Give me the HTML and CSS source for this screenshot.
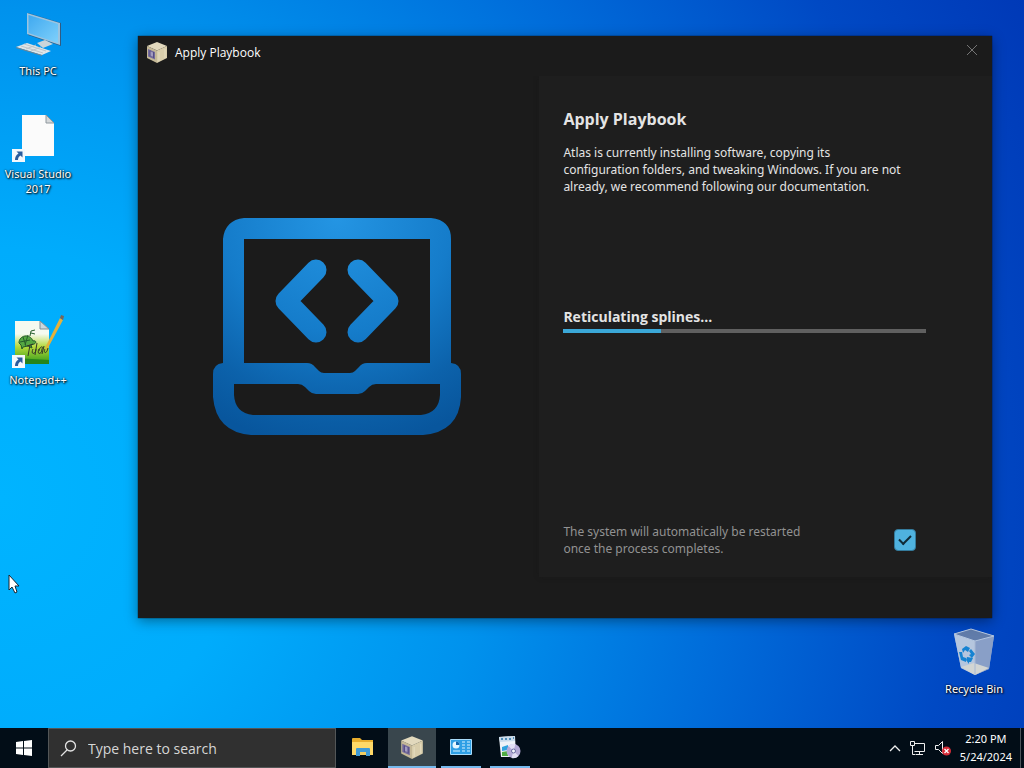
FILE: index.html
```html
<!DOCTYPE html>
<html lang="en">

<head>
	<title>Apply Playbook</title>
	<meta charset="UTF-8">
	<meta name="viewport" content="width=device-width, initial-scale=1">
	<link rel="stylesheet" href="styles.css">
</head>

<body>
	<svg width="0" height="0" class="defs" aria-hidden="true">
		<defs>
			<linearGradient id="screen" x1="0" y1="0" x2="1" y2="1">
				<stop offset="0" stop-color="#3fa9f0" />
				<stop offset="1" stop-color="#7fd0fb" />
			</linearGradient>
			<linearGradient id="grass" x1="0" y1="0" x2="0" y2="1">
				<stop offset="0.3" stop-color="#f6faf0" />
				<stop offset="0.6" stop-color="#b4d93a" />
				<stop offset="1" stop-color="#2f9a1c" />
			</linearGradient>
			<symbol id="shortcut" viewBox="0 0 13 13">
				<rect width="13" height="13" fill="#f4f8fc" />
				<path d="M4.500 2.500h6v6l-2-2c-2 1.500-2.500 2.500-2.500 4.500h-3c0-3 1-5 3.500-6.500z" fill="#2a5c9e" />
			</symbol>
			<symbol id="box" viewBox="0 0 24 24">
				<path d="M12 2l10 4-10 4.500L2 6z" fill="#e2d9bd" />
				<path d="M2 6l10 4.500V23L2 18z" fill="#c4b897" />
				<path d="M22 6l-10 4.500V23l10-5z" fill="#d8cdab" />
				<path d="M14 12v9M20 9v9" stroke="#e5dcc0" stroke-width="1" fill="none" />
				<path d="M3 9l7 3v7.500l-7-3z" fill="#746c9c" />
				<path d="M5 11.500l3 1v4l-3-1z" fill="#a39cc0" />
				<path d="M5 10.500v6M8.500 12v6" stroke="#554d86" stroke-width="1" />
			</symbol>
		</defs>
	</svg>

	<main class="desktop">
		<a href="#" class="shortcut this-pc">
			<svg width="48" height="48" viewBox="0 0 48 48">
				<path d="M14 2l33 10v23L14 24z" fill="#315b82" />
				<path d="M13 2l33 10v22L13 23z" fill="#9cc4df" />
				<path d="M14.500 4L44 13v19L14.500 22z" fill="url(#screen)" />
				<path d="M23 32l8-3 8 4-10 4z" fill="#cbd5da" />
				<path d="M2 36l11-4 24 8-9 4z" fill="#dfe5e8" />
				<path d="M2 36l26 8v1L2 37z" fill="#71848f" />
				<path d="M7 35l22 7M10 33l22 7M12 38l10-4M17 40l10-4" stroke="#bcc5ca" stroke-width="1" />
			</svg>
			<span>This PC</span>
		</a>
		<a href="#" class="shortcut visual-studio">
			<svg width="48" height="48" viewBox="0 0 48 48">
				<path d="M8 1h24l8 8v33H8z" fill="#fbfbfb" />
				<path d="M32 1v8h8z" fill="#d5d8da" stroke="#8f989e" stroke-width="1" />
				<use href="#shortcut" x="-2" y="35" width="13" height="13" />
			</svg>
			<span>Visual Studio 2017</span>
		</a>
		<a href="#" class="shortcut notepad">
			<svg width="52" height="52" viewBox="0 0 52 52">
				<path d="M3 5h25l9 8v35l-34-1z" fill="url(#grass)" />
				<path d="M28 5v8h9z" fill="#cbd7de" stroke="#7f8d94" stroke-width="1" />
				<path d="M3 42l34 2v4H3z" fill="#26841b" />
				<path d="M7 27c0-8 11-10 14-2 3-1 4 2 1 3l-3 1 1 3-4-2-5 1-1 2-1-4z" fill="#55a842" stroke="#235a28" stroke-width="1" />
				<path d="M8 26l10-2M11 21l3 9M16 19l-3 10M18 20l1-5 4-1M19 17l4 1" stroke="#265e2b" stroke-width="1" fill="none" />
				<path d="M15 30l6-2M18 29l-2 11M21 33c-3 6 3 6 3 0M25 27l-2 12M27 33c-3 6 3 6 3 0 2-4-3-2-3 2M30 38l2-8M33 33c-2 5 2 5 3-1" stroke="#343827" stroke-width="1" fill="none" />
				<path d="M34 30L48 2l3 2-14 26-4 4z" fill="#e4b13b" />
				<path d="M48 2l1-3 3 1-1 4z" fill="#75665d" />
				<use href="#shortcut" x="0" y="39" width="13" height="13" />
			</svg>
			<span>Notepad++</span>
		</a>
		<a href="#" class="shortcut recycle-bin">
			<svg width="48" height="48" viewBox="0 0 48 48">
				<path d="M4 5l17-5 23 7-5 33-14 6-14-7z" fill="#8fa9cd" />
				<path d="M4 5l21 7v34l-14-7z" fill="#b5c6de" />
				<path d="M25 12l19-5-5 33-14 6z" fill="#899fc7" />
				<path d="M4 5l17-5 23 7-19 5z" fill="#617caa" stroke="#b4c6e0" stroke-width="1" />
				<path d="M11 38l13-4 15 5-14 7z" fill="#d2d5d3" />
				<path d="M25 12v34" stroke="#a7b8d4" stroke-width="1" />
				<path d="M12 20l4-3 4 2-2 4-3-2-2 3zM21 20l4 5-3 4-3-3 2-1-2-3zM9 23h3l1 5 3 1v4l-5-2zM17 28l6 1-2 4h-2v2l-3-4z" fill="#1683d2" />
			</svg>
			<span>Recycle Bin</span>
		</a>

		<section class="window">
			<header class="titlebar">
				<svg width="24" height="24"><use href="#box" /></svg>
				<span class="title">Apply Playbook</span>
				<button type="button" class="close" aria-label="Close">
					<svg width="12" height="12" viewBox="0 0 12 12">
						<path d="M1 1l10 10M11 1L1 11" stroke="#757575" stroke-width="1" />
					</svg>
				</button>
			</header>
			<div class="content">
				<div class="art">
					<svg width="248" height="217" viewBox="0 0 248 217">
						<defs>
							<radialGradient id="blue" gradientUnits="userSpaceOnUse" cx="124" cy="0" r="230">
								<stop offset="0" stop-color="#2495e3" />
								<stop offset="0.5" stop-color="#157cca" />
								<stop offset="0.8" stop-color="#0c62ab" />
								<stop offset="1" stop-color="#08569d" />
							</radialGradient>
						</defs>
						<path fill="url(#blue)" fill-rule="evenodd" d="M31 0H218Q238 2 238 21V145Q248 146 248 156V179Q246 214 210 217H38Q3 214 0 179V156Q0 146 10 145V21Q12 2 31 0Z
							M31 21V145H94Q99 145 102 149L106 153Q108 155 111 155H137Q140 155 142 153L146 149Q149 145 154 145H217V21Z
							M21 166V177Q22 195 40 197H208Q226 195 227 177V166H163Q159 166 156 169L152 173Q149 176 145 176H103Q99 176 96 173L92 169Q89 166 85 166Z" />
						<path d="M103 52L73 83L103 114M145 52L175 83L145 114" fill="none" stroke="url(#blue)" stroke-width="21"
							stroke-linecap="round" stroke-linejoin="round" />
					</svg>
				</div>
				<div class="panel">
					<h1>Apply Playbook</h1>
					<p>Atlas is currently installing software, copying its configuration folders, and tweaking Windows. If you are
						not already, we recommend following our documentation.</p>
					<div class="status">
						<label for="progress">Reticulating splines...</label>
						<progress id="progress" value="27" max="100"></progress>
					</div>
					<div class="restart">
						<label for="restart">The system will automatically be restarted once the process completes.</label>
						<input type="checkbox" id="restart" checked>
					</div>
				</div>
			</div>
		</section>

		<svg class="cursor" width="13" height="20" viewBox="0 0 13 20">
			<path d="M1 1v15l3-3 3 6 2-1-2-6h4z" fill="#fff" stroke="#1b2530" stroke-width="1" />
		</svg>
	</main>

	<footer class="taskbar">
		<button type="button" class="start" aria-label="Start">
			<svg width="16" height="16" viewBox="0 0 16 16">
				<path d="M0 2l7-1v6.500H0zM8 1l8-1v7.500H8zM0 8.500h7V15l-7-1zM8 8.500h8V16l-8-1z" fill="#fff" />
			</svg>
		</button>
		<div class="search">
			<svg width="17" height="17" viewBox="0 0 17 17">
				<circle cx="10.500" cy="6" r="5" fill="none" stroke="#e3e3e3" stroke-width="1.300" />
				<path d="M7 10l-6 6" stroke="#e3e3e3" stroke-width="1.300" />
			</svg>
			<input type="text" placeholder="Type here to search" aria-label="Type here to search">
		</div>
		<nav class="apps">
			<button type="button" aria-label="File Explorer">
				<svg width="24" height="20" viewBox="0 0 24 20">
					<path d="M1 2q0-1 1-1h7l2 2h11v15H1z" fill="#e9ae2d" />
					<path d="M1 5h21v13H1z" fill="#ffd968" />
					<path d="M5 19v-7q0-1 1-1h12q1 0 1 1v7h-4v-4H9v4z" fill="#3f9ad6" />
					<path d="M9 15h6v3H9z" fill="#f1cd63" />
				</svg>
			</button>
			<button type="button" class="open active" aria-label="Apply Playbook">
				<svg width="26" height="26"><use href="#box" /></svg>
			</button>
			<button type="button" class="open" aria-label="System Settings">
				<svg width="22" height="16" viewBox="0 0 22 16">
					<rect width="22" height="16" rx="1" fill="#a9dcfb" />
					<rect x="1" y="1" width="20" height="14" fill="#2e9fe5" />
					<circle cx="6" cy="6" r="3.500" fill="#e4f6ff" />
					<path d="M6 6V2.500A3.500 3.500 0 0 1 9.500 6z" fill="#1267af" />
					<path d="M3 12h7M12 3h3M12 6h3M12 9h3M12 12h3M17 3h3M17 6h3M17 9h3M17 12h3" stroke="#d6f1ff" stroke-width="1" />
				</svg>
			</button>
			<button type="button" class="open" aria-label="Installer">
				<svg width="24" height="24" viewBox="0 0 24 24">
					<path d="M1 2l16-1 1 21H3z" fill="#eef3f8" />
					<path d="M1 2l16-1v5L2 7z" fill="#c9dcec" />
					<path d="M3 4h2M7 4h2M11 4h2M15 3h1" stroke="#4f8db7" stroke-width="2" />
					<path d="M4 12l6-2v5l-6 1z" fill="#31a3df" />
					<path d="M4 17l6-1v5H4z" fill="#4fac42" />
					<circle cx="15.500" cy="16" r="7" fill="#b4aad6" />
					<path d="M15.500 16l-5-5a7 7 0 0 1 7-2zM15.500 16l5 5a7 7 0 0 1-7 2z" fill="#e2dff4" />
					<circle cx="15.500" cy="16" r="2" fill="#f7f7ff" stroke="#696da0" stroke-width="1" />
				</svg>
			</button>
		</nav>
		<div class="tray">
			<button type="button" aria-label="Show hidden icons">
				<svg width="12" height="8" viewBox="0 0 12 8">
					<path d="M1 7l5-5 5 5" fill="none" stroke="#eee" stroke-width="1.300" />
				</svg>
			</button>
			<button type="button" aria-label="Network">
				<svg width="17" height="16" viewBox="0 0 17 16">
					<path d="M6 3.500h9.500v8H5.500M10.500 11.500v3M7 14.500h7M1.500 1.500h4v4h-4zM3.500 5.500v9h3" fill="none" stroke="#eee" stroke-width="1" />
				</svg>
			</button>
			<button type="button" aria-label="Volume muted">
				<svg width="18" height="16" viewBox="0 0 18 16">
					<path d="M1.500 5.500h3l4-4v12l-4-4h-3z" fill="none" stroke="#eee" stroke-width="1" />
					<circle cx="12.500" cy="11" r="4.500" fill="#d52b37" />
					<path d="M10.500 9l4 4M14.500 9l-4 4" stroke="#fff" stroke-width="1.300" />
				</svg>
			</button>
			<div class="clock">
				<span>2:20 PM</span>
				<span>5/24/2024</span>
			</div>
			<button type="button" class="show-desktop" aria-label="Show desktop"></button>
		</div>
	</footer>
</body>

</html>
```

FILE: styles.css
```css
* {
	box-sizing: border-box;
}

body {
	margin: 0;
	height: 100vh;
	display: flex;
	flex-direction: column;
	overflow: hidden;
	font-family: "Noto Sans", "Open Sans", sans-serif;
	font-size: 12px;
	color: #fff;
	background: radial-gradient(circle at 0 65%, #00b4ff 0%, #00acfc 22%, #0092ed 43%, #006cda 64%, #0049c4 84%, #0039b7 100%);
}

button {
	padding: 0;
	border: 0;
	background: none;
	color: inherit;
	display: flex;
	align-items: center;
	justify-content: center;
}

svg {
	display: block;
	flex: none;
}

.defs {
	position: absolute;
}

.desktop {
	position: relative;
	flex: 1;
}

.shortcut {
	position: absolute;
	width: 76px;
	display: flex;
	flex-direction: column;
	align-items: center;
	gap: 4px;
	color: #fff;
	font-size: 11px;
	line-height: 15px;
	text-align: center;
	text-decoration: none;
	text-shadow: 1px 1px 2px #000, 0 0 2px #000;
}

.shortcut svg {
	overflow: visible;
}

.this-pc {
	left: 0;
	top: 11px;
}

.visual-studio {
	left: 0;
	top: 114px;
}

.notepad {
	left: 0;
	top: 316px;
}

.recycle-bin {
	right: 12px;
	bottom: 32px;
}

.cursor {
	position: absolute;
	left: 8px;
	top: 574px;
}

/* installer window */
.window {
	position: absolute;
	left: 138px;
	right: 32px;
	top: 36px;
	bottom: 110px;
	display: flex;
	flex-direction: column;
	background: #1b1b1b;
	box-shadow: 0 0 1px #000, 0 3px 12px rgba(0, 0, 0, 0.4);
}

.titlebar {
	height: 40px;
	display: flex;
	align-items: flex-start;
	gap: 6px;
	padding: 4px 14px 0 7px;
	line-height: 26px;
	font-family: "Open Sans", "Noto Sans", sans-serif;
}

.close {
	width: 12px;
	height: 20px;
	margin-left: auto;
}

.content {
	flex: 1;
	display: grid;
	grid-template-columns: 47fr 53fr;
	padding-bottom: 41px;
	overflow: hidden;
}

.art {
	display: flex;
	align-items: center;
	justify-content: center;
	padding-right: 4px;
}

.panel {
	display: flex;
	flex-direction: column;
	padding: 32px 66px 20px 24px;
	background: #1e1e1e;
	box-shadow: 0 0 4px #191919;
	color: #e4e4e4;
}

.panel h1 {
	margin: 0 0 14px;
	font-family: "Open Sans", "Noto Sans", sans-serif;
	font-size: 16px;
	line-height: 22px;
}

.panel p {
	max-width: 344px;
	margin: 0;
	line-height: 17px;
}

.status {
	display: flex;
	flex-direction: column;
	gap: 1px;
	margin-top: 111px;
	font-family: "Open Sans", "Noto Sans", sans-serif;
	font-size: 14px;
	font-weight: bold;
	line-height: 22px;
}

progress {
	appearance: none;
	width: 100%;
	height: 4px;
	border: 0;
	background: #606060;
}

progress::-webkit-progress-bar {
	background: #606060;
}

progress::-webkit-progress-value {
	background: #3ba8d8;
}

progress::-moz-progress-bar {
	background: #3ba8d8;
}

.restart {
	display: flex;
	align-items: center;
	justify-content: space-between;
	margin-top: auto;
	padding-right: 10px;
	line-height: 17px;
	color: #929292;
}

.restart label {
	max-width: 260px;
}

.restart input {
	appearance: none;
	width: 22px;
	height: 22px;
	margin: 0;
	display: grid;
	place-items: center;
	border: 1px solid #347b9c;
	border-radius: 4px;
	background: #4fb2df;
}

.restart input:checked::before {
	content: "";
	width: 10px;
	height: 5px;
	margin-bottom: 4px;
	border: solid #102b38;
	border-width: 0 0 2px 2px;
	transform: rotate(-45deg);
}

/* taskbar */
.taskbar {
	height: 40px;
	display: flex;
	background: #020d17;
}

.start {
	width: 48px;
}

.search {
	width: 288px;
	display: flex;
	align-items: center;
	gap: 11px;
	padding: 0 11px;
	background: #303030;
	border: 1px solid #535657;
}

.search input {
	flex: 1;
	min-width: 0;
	padding: 0;
	border: 0;
	outline: 0;
	background: none;
	color: #ddd;
	font-family: "Open Sans", "Noto Sans", sans-serif;
	font-size: 14px;
}

.search input::placeholder {
	color: #d6d6d6;
	opacity: 1;
}

.apps {
	display: flex;
	gap: 1px;
	padding-left: 3px;
}

.apps button {
	width: 48px;
	border-bottom: 2px solid transparent;
}

.apps .open {
	border-color: #76b9ed;
	background-clip: padding-box;
}

.apps .open:not(.active) {
	width: 40px;
	margin: 0 4px;
}

.apps .active {
	background: #39464d;
	background-clip: padding-box;
}

.tray {
	display: flex;
	align-items: center;
	gap: 8px;
	margin-left: auto;
}

.clock {
	display: flex;
	flex-direction: column;
	align-items: center;
	font-size: 11px;
	line-height: 18px;
}

.show-desktop {
	align-self: stretch;
	width: 4px;
	border-left: 1px solid #4c555b;
}
```
